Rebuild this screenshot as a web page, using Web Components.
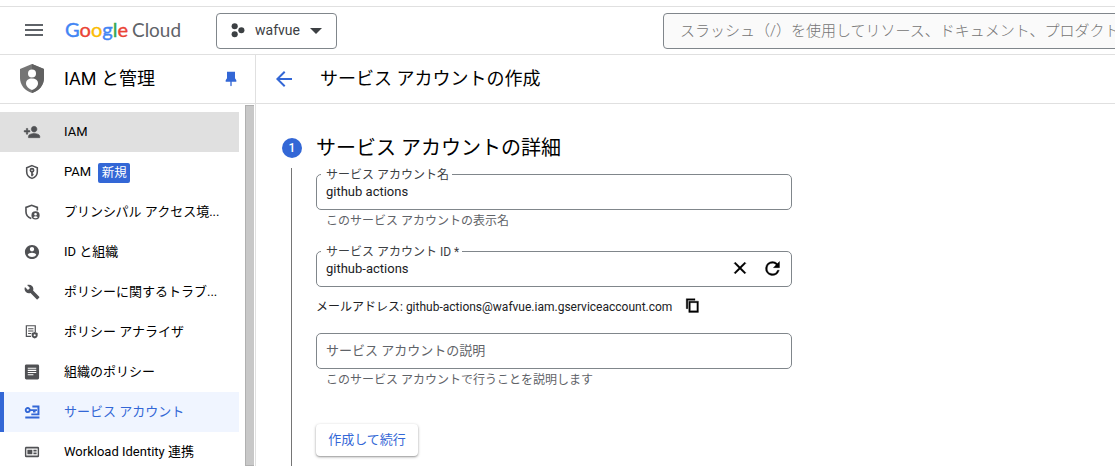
<!DOCTYPE html>
<html lang="ja">
<head>
<meta charset="utf-8">
<title>サービス アカウントの作成</title>
<style>
  html, body { margin: 0; height: 100%; overflow: hidden; }
  body {
    background: #fff;
    color: #000;
    font-family: Roboto, "Noto Sans CJK JP", sans-serif;
    font-size: 13px;
  }
</style>
</head>
<body>
<console-app></console-app>

<script>
const ICONS = {
  menu: '<path d="M3 6h18v2H3zm0 5h18v2H3zm0 5h18v2H3z"/>',
  project: '<circle cx="5.9" cy="5.2" r="4.9"/><circle cx="16.600" cy="11.600" r="4.9"/><circle cx="5.9" cy="18" r="4.9"/>',
  pin: '<path d="M6 1h12v10l2 3v2h-7v6l-1 1-1-1v-6H4v-2l2-3z"/>',
  back: '<path d="M20 11H7.830l5.590-5.590L12 4l-8 8 8 8 1.410-1.410L7.830 13H20z"/>',
  personAdd: '<path d="M15 12c2.210 0 4-1.790 4-4s-1.790-4-4-4-4 1.790-4 4 1.790 4 4 4zm-9-2V7H4v3H1v2h3v3h2v-3h3v-2zm9 4c-2.670 0-8 1.340-8 4v2h16v-2c0-2.660-5.330-4-8-4z" stroke="currentColor" stroke-width=".8"/>',
  shieldKey: '<path fill="none" stroke="currentColor" stroke-width="2.2" d="M12 3 19.500 6v5.500c0 4.300-3.100 8-7.500 9.500-4.400-1.500-7.500-5.200-7.500-9.500V6z"/><path fill="none" stroke="currentColor" stroke-width="2.400" d="M12 11.500V18M12 15.500h2.200"/><circle cx="12" cy="9.500" r="2.300" fill="none" stroke="currentColor" stroke-width="2.400"/>',
  shieldPerson: '<path fill="none" stroke="currentColor" stroke-width="2.3" d="M19.500 10V5.500L11.500 2.600 3.500 5.500v6c0 4.500 3 8 7.500 9.800"/><path fill-rule="evenodd" d="M17 11a5.800 5.800 0 1 0 0 11.600A5.800 5.800 0 0 0 17 11zm0 2.300a1.900 1.900 0 1 1 0 3.800 1.900 1.900 0 0 1 0-3.800zm0 7.600a4 4 0 0 1-3.200-1.600c.7-.9 1.900-1.400 3.200-1.400s2.500.5 3.200 1.400a4 4 0 0 1-3.200 1.600z"/>',
  account: '<path d="M12 2C6.480 2 2 6.480 2 12s4.480 10 10 10 10-4.480 10-10S17.520 2 12 2zm0 3c1.660 0 3 1.340 3 3s-1.340 3-3 3-3-1.340-3-3 1.340-3 3-3zm0 14.200c-2.500 0-4.710-1.280-6-3.220.03-1.990 4-3.080 6-3.080 1.990 0 5.970 1.090 6 3.080-1.290 1.940-3.500 3.220-6 3.220z"/>',
  wrench: '<path transform="translate(.6 .6) scale(.95)" d="m22.700 19-9.100-9.100c.9-2.300.4-5-1.500-6.900-2-2-5-2.400-7.400-1.300L9 6 6 9 1.600 4.700C.4 7.100.9 10.100 2.900 12.100c1.900 1.900 4.600 2.400 6.900 1.500l9.100 9.100c.4.400 1 .4 1.400 0l2.300-2.300c.5-.4.5-1.100.1-1.400z"/>',
  analyzer: '<g transform="translate(1.500 1.500) scale(.84)"><path fill="none" stroke="currentColor" stroke-width="2" d="M11 20H3V2h15v11"/><path d="M6 6h9v1.800H6zm0 4h9v1.800H6zm0 4h5v1.800H6z"/><path fill-rule="evenodd" d="m17 12.500 5 1.800v3.900c0 2.500-2.500 4.300-5 5.300-2.500-1-5-2.800-5-5.300v-3.900zm0 3.700a1.800 1.800 0 1 0 0 3.600 1.800 1.800 0 0 0 0-3.600z"/></g>',
  article: '<path fill-rule="evenodd" d="M4 1.500h16a2 2 0 0 1 2 2v17a2 2 0 0 1-2 2H4a2 2 0 0 1-2-2v-17c0-1.100.9-2 2-2zM6 6v1.500h12V6zm0 3v1.500h12V9zm0 3v1.500h12V12zm0 3v1.500h8V15z"/>',
  serviceKey: '<circle cx="6" cy="9.300" r="2.900" fill="none" stroke="currentColor" stroke-width="2.600"/><path d="M8.500 8H19v2.600h-2v2.200h-3.600v-2.200H8.500zM12.500 3H22.500v13.500H11V14h8.700V5.500h-7.200zM2.500 18.500h20v2.800h-20z"/>',
  card: '<path fill-rule="evenodd" d="M4 4.500h16a2 2 0 0 1 2 2v11a2 2 0 0 1-2 2H4a2 2 0 0 1-2-2v-11c0-1.100.9-2 2-2zm0 2.700v9.600h16V7.200z"/><path d="M5.500 9h7v6h-7zM14 9h4.500v2.200H14zm0 3.800h4.500V15H14z"/>',
  close: '<path d="m19 6.400-1.400-1.400-5.600 5.600L6.400 5 5 6.400l5.600 5.600L5 17.600 6.400 19l5.600-5.600 5.600 5.600 1.400-1.400-5.600-5.600z" stroke="currentColor" stroke-width=".6"/>',
  refresh: '<path d="M17.650 6.350A7.960 7.960 0 0 0 12 4a8 8 0 1 0 7.730 10h-2.080A6 6 0 1 1 12 6c1.660 0 3.140.69 4.220 1.780L13 11h7V4z" stroke="currentColor" stroke-width=".4"/>',
  copy: '<path d="M16 1H2v16h2.500V3.500H16zM21.500 5H6v18h15.500zM19 20.500H8.500v-13H19z" stroke="currentColor" stroke-width=".5"/>'
};

const icon = (name, size) =>
  `<svg class="icon" viewBox="0 0 24 24" width="${size}" height="${size}" fill="currentColor">${ICONS[name]}</svg>`;

class ConsoleHeader extends HTMLElement {
  constructor() {
    super();
    this.attachShadow({ mode: 'open' });
  }

  connectedCallback() {
    this.shadowRoot.innerHTML = `
      <style>
        :host {
          display: flex;
          align-items: center;
          box-sizing: border-box;
          height: 49px;
          margin-top: 6px;
          padding-left: 22px;
          border-top: 1px solid #e0e0e0;
          border-bottom: 1px solid #e0e0e0;
        }
        svg { display: block; flex: none; }
        .menu { margin-bottom: 1px; color: #5f6368; }
        .logo { margin-left: 18px; width: 122px; }
        .picker {
          display: flex;
          align-items: center;
          box-sizing: border-box;
          flex: none;
          width: 121px;
          height: 36px;
          margin-left: 30px;
          padding-left: 14px;
          border: 1px solid #80868b;
          border-radius: 4px;
          color: #3c4043;
          font-size: 14px;
        }
        .picker span { width: 46px; margin: -1px 9px 0 9px; }
        .search {
          box-sizing: border-box;
          flex: none;
          width: 480px;
          height: 36px;
          margin-left: 326px;
          padding-left: 16px;
          border: 1px solid #80868b;
          border-radius: 4px;
          background: #fafafa;
          color: #757575;
          font-size: 15px;
          font-weight: 300;
          line-height: 34px;
          white-space: nowrap;
        }
      </style>
      <span class="menu">${icon('menu', 24)}</span>
      <svg class="logo" width="122" height="32" font-family="Lato, sans-serif" font-size="20">
        <text x="1" y="22" textLength="63" lengthAdjust="spacingAndGlyphs" stroke-width=".4"><tspan fill="#4285f4" stroke="#4285f4">G</tspan><tspan fill="#ea4335" stroke="#ea4335">o</tspan><tspan fill="#fbbc04" stroke="#fbbc04">o</tspan><tspan fill="#4285f4" stroke="#4285f4">g</tspan><tspan fill="#34a853" stroke="#34a853">l</tspan><tspan fill="#ea4335" stroke="#ea4335">e</tspan></text>
        <text x="68" y="22" textLength="49" lengthAdjust="spacingAndGlyphs" fill="#5f6368">Cloud</text>
      </svg>
      <div class="picker">
        ${icon('project', 15)}
        <span>wafvue</span>
        <svg width="12" height="6"><path d="M0 0h12L6 6z" fill="#3c4043"/></svg>
      </div>
      <div class="search">スラッシュ（/）を使用してリソース、ドキュメント、プロダクト</div>
    `;
  }
}
customElements.define('console-header', ConsoleHeader);

class NavItem extends HTMLElement {
  constructor() {
    super();
    this.attachShadow({ mode: 'open' });
  }

  connectedCallback() {
    this.shadowRoot.innerHTML = `
      <style>
        :host {
          display: flex;
          align-items: center;
          box-sizing: border-box;
          width: 239px;
          height: 40px;
          padding-left: 23px;
          white-space: nowrap;
        }
        :host([hovered]) { background: #e0e0e0; }
        :host([active]) {
          padding-left: 19px;
          border-left: 4px solid #3367d6;
          background: #f0f5ff;
          color: #3367d6;
        }
        svg { display: block; flex: none; color: #505154; margin-right: 23px; }
        :host([active]) svg { color: #3367d6; }
        .text { line-height: 20px; }
      </style>
      ${icon(this.getAttribute('icon'), 18)}
      <span class="text"><slot></slot></span>
      <slot name="badge"></slot>
    `;
    // the 24-unit glyphs are drawn at 17px inside an 18px slot
    this.shadowRoot.querySelector('svg').setAttribute('viewBox', '-0.7 -0.7 25.4 25.4');
  }
}
customElements.define('nav-item', NavItem);

class NewBadge extends HTMLElement {
  constructor() {
    super();
    this.attachShadow({ mode: 'open' });
  }

  connectedCallback() {
    this.shadowRoot.innerHTML = `
      <style>
        :host {
          display: block;
          width: 32px;
          height: 20px;
          margin: 2px 0 0 7px;
          border-radius: 2px;
          background: #3367d6;
          color: #fff;
          font-size: 12.5px;
          line-height: 19px;
          text-align: center;
        }
      </style>
      <slot></slot>
    `;
  }
}
customElements.define('new-badge', NewBadge);

class SideNav extends HTMLElement {
  constructor() {
    super();
    this.attachShadow({ mode: 'open' });
  }

  connectedCallback() {
    this.shadowRoot.innerHTML = `
      <style>
        :host {
          display: flex;
          flex-direction: column;
          box-sizing: border-box;
          flex: none;
          width: 256px;
          border-right: 1px solid #e0e0e0;
          overflow: hidden;
        }
        .title {
          display: flex;
          align-items: center;
          box-sizing: border-box;
          flex: none;
          height: 49px;
          padding-left: 20px;
          border-bottom: 1px solid #e0e0e0;
        }
        .title svg { display: block; flex: none; }
        h2 {
          width: 159px;
          margin: 0 0 0 20px;
          font-size: 18px;
          font-weight: 400;
          line-height: 24px;
        }
        .pin { color: #3367d6; }
        .body { display: flex; flex: 1; min-height: 0; }
        .list { width: 245px; padding-top: 8px; }
        .bar {
          box-sizing: border-box;
          width: 9px;
          margin-top: 1px;
          border: 1px solid #b0b0b0;
          border-right-width: 0;
          background: #c8c8c8;
        }
      </style>
      <div class="title">
        <svg width="24" height="30" viewBox="0 0 24 30">
          <path fill="#757575" d="M12 0 24 5v9c0 7-5 13-12 15C5 27 0 21 0 14V5z"/>
          <path fill="#616161" d="M12 0 24 5v9c0 7-5 13-12 15z"/>
          <circle cx="12" cy="9.5" r="4" fill="#fff"/>
          <path fill="#fff" d="M12 14.500c3.500 0 6 1.700 6 5 0 3-3 5.300-6 6.500-3-1.200-6-3.500-6-6.500 0-3.300 2.500-5 6-5z"/>
        </svg>
        <h2>IAM と管理</h2>
        <span class="pin">${icon('pin', 16)}</span>
      </div>
      <div class="body">
        <div class="list">
          <nav-item icon="personAdd" hovered>IAM</nav-item>
          <nav-item icon="shieldKey">PAM<new-badge slot="badge">新規</new-badge></nav-item>
          <nav-item icon="shieldPerson">プリンシパル アクセス境...</nav-item>
          <nav-item icon="account">ID と組織</nav-item>
          <nav-item icon="wrench">ポリシーに関するトラブ...</nav-item>
          <nav-item icon="analyzer">ポリシー アナライザ</nav-item>
          <nav-item icon="article">組織のポリシー</nav-item>
          <nav-item icon="serviceKey" active>サービス アカウント</nav-item>
          <nav-item icon="card">Workload Identity 連携</nav-item>
        </div>
        <div class="bar"></div>
      </div>
    `;
  }
}
customElements.define('side-nav', SideNav);

class TextField extends HTMLElement {
  constructor() {
    super();
    this.attachShadow({ mode: 'open' });
  }

  connectedCallback() {
    const label = this.getAttribute('label');
    const placeholder = this.getAttribute('placeholder');
    const hint = this.getAttribute('hint');
    this.shadowRoot.innerHTML = `
      <style>
        :host { display: block; width: 476px; }
        .box {
          position: relative;
          display: flex;
          align-items: center;
          box-sizing: border-box;
          height: 36px;
          padding: 0 8px 0 9px;
          border: 1px solid #80868b;
          border-radius: 5px;
          color: #202124;
          line-height: 18px;
        }
        /* sits on the top border and cuts a notch into it */
        label {
          position: absolute;
          left: 4px;
          top: -8px;
          padding: 0 3px 0 5px;
          background: #fff;
          color: #3c4043;
          font-size: 12px;
          line-height: 16px;
          white-space: nowrap;
        }
        .value { flex: 1; }
        .placeholder { color: #5f6368; }
        .hint {
          padding: 2px 0 0 10px;
          color: #5f6368;
          font-size: 12px;
          line-height: 18px;
        }
      </style>
      <div class="box">
        ${label ? `<label>${label}</label>` : ''}
        <span class="value ${placeholder ? 'placeholder' : ''}">${placeholder || this.getAttribute('value')}</span>
        <slot></slot>
      </div>
      ${hint ? `<div class="hint">${hint}</div>` : ''}
    `;
  }
}
customElements.define('text-field', TextField);

class AccountForm extends HTMLElement {
  constructor() {
    super();
    this.attachShadow({ mode: 'open' });
  }

  connectedCallback() {
    this.shadowRoot.innerHTML = `
      <style>
        :host { display: flex; flex: 1; padding: 34px 0 0 26px; min-height: 0; }
        svg { display: block; }
        .step { display: flex; flex-direction: column; align-items: center; width: 20px; }
        .num {
          flex: none;
          width: 20px;
          height: 20px;
          border-radius: 50%;
          background: #3367d6;
          color: #fff;
          font-size: 12px;
          font-weight: 500;
          line-height: 20px;
          text-align: center;
        }
        .line { flex: 1; width: 1px; margin: 10px 1px 0 0; background: #757575; }
        .fields { width: 476px; margin-left: 14px; }
        h3 { margin: -3px 0 0; height: 39px; font-size: 20px; font-weight: 400; line-height: 26px; }
        .name { height: 77px; }
        .id { height: 36px; }
        .actions { display: flex; align-items: center; gap: 12px; color: #000; margin-top: -2px; }
        .email {
          display: flex;
          align-items: center;
          height: 18px;
          margin: 10px 0 18px;
          color: #202124;
          font-size: 12px;
          line-height: 16px;
          white-space: nowrap;
        }
        .email span { margin-top: 1px; }
        .email svg { margin: -1px 0 0 13px; color: #000; }
        .description { height: 91px; }
        button {
          display: block;
          width: 102px;
          height: 32px;
          padding: 0 0 3px;
          border: 0;
          border-radius: 4px;
          background: #fff;
          box-shadow: 0 1px 3px rgba(0, 0, 0, .35), 0 1px 1px rgba(0, 0, 0, .12);
          color: #3367d6;
          font: 400 13px Roboto, "Noto Sans CJK JP", sans-serif;
        }
      </style>
      <div class="step"><div class="num">1</div><div class="line"></div></div>
      <div class="fields">
        <h3>サービス アカウントの詳細</h3>
        <text-field class="name" label="サービス アカウント名" value="github actions" hint="このサービス アカウントの表示名"></text-field>
        <text-field class="id" label="サービス アカウント ID *" value="github-actions">
          <div class="actions">${icon('close', 20)}${icon('refresh', 21)}</div>
        </text-field>
        <div class="email"><span>メールアドレス: github-actions@wafvue.iam.gserviceaccount.com</span>${icon('copy', 15)}</div>
        <text-field class="description" placeholder="サービス アカウントの説明" hint="このサービス アカウントで行うことを説明します"></text-field>
        <button>作成して続行</button>
      </div>
    `;
  }
}
customElements.define('account-form', AccountForm);

class ConsoleApp extends HTMLElement {
  constructor() {
    super();
    this.attachShadow({ mode: 'open' });
  }

  connectedCallback() {
    this.shadowRoot.innerHTML = `
      <style>
        :host { display: flex; flex-direction: column; height: 100vh; overflow: hidden; }
        .body { display: flex; flex: 1; min-height: 0; }
        main { display: flex; flex: 1; flex-direction: column; min-width: 0; }
        .title {
          display: flex;
          align-items: center;
          box-sizing: border-box;
          flex: none;
          height: 49px;
          padding-left: 16px;
          border-bottom: 1px solid #e0e0e0;
        }
        .title svg { display: block; margin-top: -1px; color: #3367d6; }
        h1 { margin: 0 0 0 24px; font-size: 18px; font-weight: 400; line-height: 24px; }
      </style>
      <console-header></console-header>
      <div class="body">
        <side-nav></side-nav>
        <main>
          <div class="title">${icon('back', 24)}<h1>サービス アカウントの作成</h1></div>
          <account-form></account-form>
        </main>
      </div>
    `;
  }
}
customElements.define('console-app', ConsoleApp);
</script>
</body>
</html>
